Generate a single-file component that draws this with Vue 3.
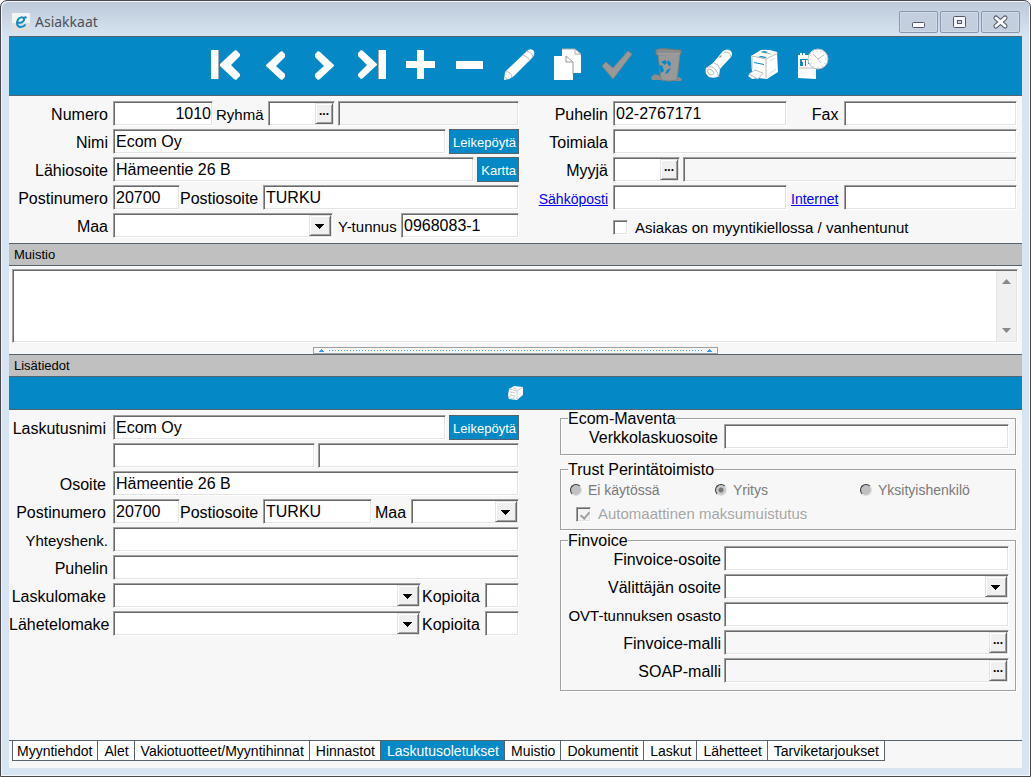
<script setup>
import { ref } from 'vue'

const customer = ref({
  number: '1010',
  name: 'Ecom Oy',
  street: 'Hämeentie 26 B',
  zip: '20700',
  city: 'TURKU',
  businessId: '0968083-1',
  phone: '02-2767171',
})
const billing = ref({ name: 'Ecom Oy', street: 'Hämeentie 26 B', zip: '20700', city: 'TURKU' })
const collection = ref('Yritys')
const collectionModes = ['Ei käytössä', 'Yritys', 'Yksityishenkilö']
const tabs = [
  'Myyntiehdot', 'Alet', 'Vakiotuotteet/Myyntihinnat', 'Hinnastot', 'Laskutusoletukset',
  'Muistio', 'Dokumentit', 'Laskut', 'Lähetteet', 'Tarviketarjoukset',
]
const activeTab = ref('Laskutusoletukset')
</script>

<template>
  <div class="window">
    <header class="titlebar">
      <svg class="app-icon" viewBox="0 0 18 18">
        <rect width="18" height="18" rx="1" fill="#f4f4f4" />
        <rect y="10" width="18" height="8" fill="#dedede" />
        <path d="M5 9.500 C9 10.500 12.500 8.500 12 6 C11 3.500 7.500 4 6 6.500 C4 10 5 13.500 8 14 C10.500 14.300 12.500 13 13.500 11.500 M12 5 L14.500 4" fill="none" stroke="#118bc6" stroke-width="2" />
      </svg>
      <h1>Asiakkaat</h1>
      <div class="window-buttons">
        <button type="button" aria-label="Pienennä">
          <svg viewBox="0 0 37 20"><rect x="12.500" y="10.500" width="12" height="5" rx="1" fill="#fff" stroke="#515768" /></svg>
        </button>
        <button type="button" aria-label="Suurenna">
          <svg viewBox="0 0 37 20"><rect x="12.500" y="4.500" width="12" height="11" rx="1" fill="#f7f7f7" stroke="#515768" /><rect x="16.500" y="8.500" width="4" height="3" fill="#c6d3e2" stroke="#515768" /></svg>
        </button>
        <button type="button" aria-label="Sulje">
          <svg viewBox="0 0 37 20"><path d="M14 6 L23 14 M23 6 L14 14" stroke="#515768" stroke-width="5" stroke-linecap="round" /><path d="M14 6 L23 14 M23 6 L14 14" stroke="#fafafa" stroke-width="3" stroke-linecap="round" /></svg>
        </button>
      </div>
    </header>

    <main class="client">
      <nav class="toolbar" aria-label="Toiminnot">
        <button type="button" aria-label="Ensimmäinen">
          <svg viewBox="0 0 49 58" fill="#fff"><path d="M17 13h1v29h-1z" fill="#aaa" /><path d="M10 13h7v29h-7z" /><path d="M19 27 33 14l2-1 4 4v2l-9 9 9 9v2l-4 4-2-1-14-13z" /></svg>
        </button>
        <button type="button" aria-label="Edellinen">
          <svg viewBox="0 0 49 58" fill="#fff"><path d="M16 28 30 15l2-1 3 3v3l-9 9 9 8v3l-3 3-2-1-14-13z" /></svg>
        </button>
        <button type="button" aria-label="Seuraava">
          <svg viewBox="0 0 49 58" fill="#fff"><path d="M35 28 21 15l-2-1-3 3v3l9 9-9 8v3l3 3 2-1 14-13z" /></svg>
        </button>
        <button type="button" aria-label="Viimeinen">
          <svg viewBox="0 0 49 58" fill="#fff"><path d="M30 13h1v29h-1z" fill="#aaa" /><path d="M31 13h7v29h-7z" /><path d="M29 27 15 14l-2-1-3 3v3l9 9-9 9v2l3 3 2-1 14-13z" /></svg>
        </button>
        <button type="button" aria-label="Lisää">
          <svg viewBox="0 0 49 58" fill="#fff"><path d="M20 13h7v11h11v7H27v11h-7V31H9v-7h11z" /></svg>
        </button>
        <button type="button" aria-label="Poista rivi">
          <svg viewBox="0 0 49 58" fill="#fff"><path d="M10 24h27v8H10z" /></svg>
        </button>
        <button type="button" aria-label="Muokkaa">
          <svg viewBox="0 0 49 58" fill="#fff"><path d="M9 43l1-8 4-4 18-17q3-3 6-1 2 2 1 5l-2 3-18 18-5 3z" /><path d="M10 35q3-1 5 1t2 5M9 39l3 3M28 18q5 1 7 6M31 14q6 1 7 6" fill="none" stroke="#bbb" /></svg>
        </button>
        <button type="button" aria-label="Kopioi">
          <svg viewBox="0 0 49 58" fill="#fff"><path d="M18 12h13l6 6v18H18z" /><path d="M31 12v5h6zM18 12h13" stroke="#aaa" /><path d="M10 19h13l6 5v19H10z" /><path d="M22 19v6h7zM29 25v12" fill="#fff" stroke="#999" /></svg>
        </button>
        <button type="button" aria-label="Hyväksy" disabled>
          <svg viewBox="0 0 49 58"><path d="M9 29l4-4 7 6 15-17 4 3-19 25z" fill="#999" stroke="#808080" stroke-linejoin="round" /></svg>
        </button>
        <button type="button" aria-label="Poista" disabled>
          <svg viewBox="0 0 49 58"><path d="M9 40l4-3 6 2 1 4H10zM34 42l3-2 3 2-1 2h-5z" fill="#8c8c8c" /><path d="M16 17h22l-3 26q-8 2-16 0z" fill="#999" stroke="#808080" /><path d="M14 13q2-2 12-1t13 1v4l-25 1z" fill="#8c8c8c" stroke="#777" /><path d="M16 17h22" stroke="#b5b5b5" /><path d="M19 25l4-2 2 2-2 3zM26 23l3 3-1 4-3-4zM17 29l3-1 2 6-3 2zM25 33l4-2-3 5-3 1z" fill="#0489c6" /></svg>
        </button>
        <button type="button" aria-label="Etsi">
          <svg viewBox="0 0 49 58" fill="#fff"><path d="M15 31l7-5 10-12q4-3 8 0 2 3 0 6l-11 12-1 7q-4 3-10 1-5-4-3-9z" /><path d="M15 31q6-3 9 1t4 8M23 26q5 1 6 6M33 15q6 0 7 5M19 38q-4-3-2-6 5 0 6 4 0 2-4 2" fill="none" stroke="#bbb" /><path d="M28 20l2-2 1 1-2 2z" fill="#999" /></svg>
        </button>
        <button type="button" aria-label="Tulosta">
          <svg viewBox="0 0 49 58"><path d="M11 19l10-6q8-1 16 2l1 20-11 7-8-1-7 1-4-3 4-4z" fill="#fff" /><path d="M11 19q8 1 15 3l12-6M26 22v19M12 20v12M21 15l10 2" fill="none" stroke="#bbb" /><path d="M18 20l3-1 6 1-2 1zM21 15l3-1 4 1-2 1zM14 25l10 2v1l-10-2z" fill="#0489c6" /><path d="M9 37l6-4 8 3-5 6z" fill="#fff" stroke="#bbb" /><path d="M30 24l5-3M30 36l6-4" stroke="#ddd" /></svg>
        </button>
        <button type="button" aria-label="Ajastus">
          <svg viewBox="0 0 49 58"><path d="M9 18h18v24l-18-1z" fill="#fff" /><path d="M11 22h11v7H11z" fill="#0489c6" /><path d="M13 24h2v5M18 23v5h4M12 16v3M15 16v3" fill="none" stroke="#fff" stroke-width="2" /><path d="M10 31h16" stroke="#bbb" /><circle cx="29" cy="22" r="10" fill="#fff" stroke="#bbb" /><circle cx="29" cy="22" r="8" fill="none" stroke="#bbb" stroke-dasharray="1 3" /><path d="M24 17l5 5 6-4M29 22l3 4" fill="none" stroke="#bbb" /></svg>
        </button>
      </nav>

      <form class="panels basics" @submit.prevent>
        <div class="rows">
          <div class="row">
            <label class="lead" for="number">Numero</label>
            <input id="number" v-model="customer.number" class="field number" type="text">
            <label class="near compact" for="group">Ryhmä</label>
            <span class="field lookup short"><input id="group" type="text"><button type="button" aria-label="Valitse ryhmä">...</button></span>
            <input class="field grow readonly" type="text" readonly aria-label="Ryhmän nimi">
          </div>
          <div class="row">
            <label class="lead" for="name">Nimi</label>
            <input id="name" v-model="customer.name" class="field grow" type="text">
            <button class="action" type="button">Leikepöytä</button>
          </div>
          <div class="row">
            <label class="lead" for="street">Lähiosoite</label>
            <input id="street" v-model="customer.street" class="field grow" type="text">
            <button class="action" type="button">Kartta</button>
          </div>
          <div class="row">
            <label class="lead" for="zip">Postinumero</label>
            <input id="zip" v-model="customer.zip" class="field short" type="text">
            <label class="joined" for="city">Postiosoite</label>
            <input id="city" v-model="customer.city" class="field grow" type="text">
          </div>
          <div class="row">
            <label class="lead" for="country">Maa</label>
            <span class="field combo grow"><select id="country"><option></option></select></span>
            <label class="middle compact" for="business">Y-tunnus</label>
            <input id="business" v-model="customer.businessId" class="field business" type="text">
          </div>
        </div>

        <div class="rows contact">
          <div class="row">
            <label class="lead" for="phone">Puhelin</label>
            <input id="phone" v-model="customer.phone" class="field grow" type="text">
            <label class="second" for="fax">Fax</label>
            <input id="fax" class="field grow" type="text">
          </div>
          <div class="row">
            <label class="lead" for="branch">Toimiala</label>
            <input id="branch" class="field grow" type="text">
          </div>
          <div class="row">
            <label class="lead" for="seller">Myyjä</label>
            <span class="field lookup short"><input id="seller" type="text"><button type="button" aria-label="Valitse myyjä">...</button></span>
            <input class="field grow readonly" type="text" readonly aria-label="Myyjän nimi">
          </div>
          <div class="row">
            <span class="lead"><a href="#email">Sähköposti</a></span>
            <input class="field grow" type="text" aria-label="Sähköposti">
            <span class="second"><a href="#internet">Internet</a></span>
            <input class="field grow" type="text" aria-label="Internet">
          </div>
          <div class="row">
            <label class="banned compact"><input type="checkbox">Asiakas on myyntikiellossa / vanhentunut</label>
          </div>
        </div>
      </form>

      <h2 class="section">Muistio</h2>
      <div class="memo field">
        <textarea aria-label="Muistio"></textarea>
        <div class="scroller">
          <button type="button" aria-label="Ylös"><svg viewBox="0 0 9 5"><path d="M0 5 4.500 0 9 5z" fill="#888" /></svg></button>
          <button type="button" aria-label="Alas"><svg viewBox="0 0 9 5"><path d="M0 0h9L4.500 5z" fill="#888" /></svg></button>
        </div>
      </div>
      <button class="splitter" type="button" aria-label="Pienennä muistio">
        <svg viewBox="0 0 5 3"><path d="M2 0h1v1h1v1h1v1H0V2h1V1h1z" /></svg>
        <span class="dots"></span>
        <svg viewBox="0 0 5 3"><path d="M2 0h1v1h1v1h1v1H0V2h1V1h1z" /></svg>
      </button>
      <h2 class="section">Lisätiedot</h2>

      <div class="subbar">
        <button type="button" aria-label="Tulosta">
          <svg viewBox="0 0 17 16"><path d="M2 4l5-3 9 1v8l-6 5-8-1-1-4z" fill="#fff" /><path d="M2 4l8 2 6-4M10 6v8M3 7l5 1M6 3l4 1" fill="none" stroke="#ccc" /><path d="M1 12l3-2 4 1-2 3z" fill="#fff" stroke="#ccc" /></svg>
        </button>
      </div>

      <form class="panels details" @submit.prevent>
        <div class="rows">
          <div class="row">
            <label class="lead inset" for="bill-name">Laskutusnimi</label>
            <input id="bill-name" v-model="billing.name" class="field grow" type="text">
            <button class="action" type="button">Leikepöytä</button>
          </div>
          <div class="row">
            <span class="lead"></span>
            <input class="field grow" type="text" aria-label="Laskutusnimi, rivi 2">
            <input class="field grow" type="text" aria-label="Laskutusnimi, rivi 3">
          </div>
          <div class="row">
            <label class="lead inset" for="bill-street">Osoite</label>
            <input id="bill-street" v-model="billing.street" class="field grow" type="text">
          </div>
          <div class="row">
            <label class="lead inset" for="bill-zip">Postinumero</label>
            <input id="bill-zip" v-model="billing.zip" class="field short" type="text">
            <label class="joined" for="bill-city">Postiosoite</label>
            <input id="bill-city" v-model="billing.city" class="field grow" type="text">
            <label class="land" for="bill-country">Maa</label>
            <span class="field combo grow"><select id="bill-country"><option></option></select></span>
          </div>
          <div class="row">
            <label class="lead compact" for="contact">Yhteyshenk.</label>
            <input id="contact" class="field grow" type="text">
          </div>
          <div class="row">
            <label class="lead" for="bill-phone">Puhelin</label>
            <input id="bill-phone" class="field grow" type="text">
          </div>
          <div class="row">
            <label class="lead inset" for="invoice-form">Laskulomake</label>
            <span class="field combo grow"><select id="invoice-form"><option></option></select></span>
            <label class="copies" for="invoice-copies">Kopioita</label>
            <input id="invoice-copies" class="field tiny" type="text">
          </div>
          <div class="row">
            <label class="lead" for="delivery-form">Lähetelomake</label>
            <span class="field combo grow"><select id="delivery-form"><option></option></select></span>
            <label class="copies" for="delivery-copies">Kopioita</label>
            <input id="delivery-copies" class="field tiny" type="text">
          </div>
        </div>

        <div class="groups">
          <fieldset>
            <legend>Ecom-Maventa</legend>
            <div class="row">
              <label class="lead inset" for="einvoice">Verkkolaskuosoite</label>
              <input id="einvoice" class="field grow" type="text">
            </div>
          </fieldset>
          <fieldset disabled>
            <legend>Trust Perintätoimisto</legend>
            <div class="modes">
              <label v-for="mode in collectionModes" :key="mode">
                <input v-model="collection" type="radio" name="collection" :value="mode">{{ mode }}
              </label>
            </div>
            <label class="reminder compact"><input type="checkbox" checked><span>Automaattinen maksumuistutus</span></label>
          </fieldset>
          <fieldset>
            <legend>Finvoice</legend>
            <div class="rows">
              <div class="row">
                <label class="lead" for="fin-address">Finvoice-osoite</label>
                <input id="fin-address" class="field grow" type="text">
              </div>
              <div class="row">
                <label class="lead" for="broker">Välittäjän osoite</label>
                <span class="field combo grow"><select id="broker"><option></option></select></span>
              </div>
              <div class="row">
                <label class="lead compact" for="ovt">OVT-tunnuksen osasto</label>
                <input id="ovt" class="field grow" type="text">
              </div>
              <div class="row">
                <label class="lead" for="fin-template">Finvoice-malli</label>
                <span class="field lookup grow readonly"><input id="fin-template" type="text" readonly><button type="button" aria-label="Valitse Finvoice-malli">...</button></span>
              </div>
              <div class="row">
                <label class="lead" for="soap-template">SOAP-malli</label>
                <span class="field lookup grow readonly"><input id="soap-template" type="text" readonly><button type="button" aria-label="Valitse SOAP-malli">...</button></span>
              </div>
            </div>
          </fieldset>
        </div>
      </form>

      <nav class="tabs" aria-label="Välilehdet">
        <button v-for="tab in tabs" :key="tab" type="button" :class="{ active: tab === activeTab }" @click="activeTab = tab">{{ tab }}</button>
      </nav>
    </main>
  </div>
</template>

<style>
body {
  background: #fff;
}
</style>

<style scoped>
.window, .window * {
  box-sizing: border-box;
}
.window {
  display: flex;
  flex-direction: column;
  min-height: 100vh;
  padding: 0 7px 8px;
  border: 1px solid #47474c;
  border-radius: 7px 7px 0 0;
  box-shadow: inset 1px 1px #f3f7fb, inset -1px -1px #f3f7fb;
  background: linear-gradient(#bdc9d8, #d7e4f2 36px);
  color: #000;
  font: 16px/20px "Liberation Sans", Arial, sans-serif;
}
button, input, select, textarea {
  margin: 0;
  padding: 0;
  border: 0;
  border-radius: 0;
  outline: 0;
  background: none;
  color: inherit;
  font: inherit;
}
svg {
  display: block;
}
.titlebar {
  display: flex;
  align-items: center;
  gap: 5px;
  height: 35px;
  padding: 6px 3px 0 4px;
}
.app-icon {
  width: 18px;
  height: 18px;
}
h1 {
  flex: 1;
  margin: 0;
  color: #4b5058;
  font: 14px/20px "Noto Sans", sans-serif;
}
.window-buttons {
  display: flex;
  gap: 2px;
}
.window-buttons button {
  width: 39px;
  height: 22px;
  border: 1px solid #8996b0;
  border-radius: 2px;
  background: #c3cfde;
  box-shadow: inset 0 0 0 1px #d0dae7;
}
.window-buttons svg {
  width: 37px;
  height: 20px;
}
.client {
  display: flex;
  flex: 1;
  flex-direction: column;
  margin: 0 1px;
  background: #f7f7f7;
}
.toolbar {
  display: flex;
  justify-content: center;
  padding-left: 7px;
  border-top: 1px solid #56646e;
  border-bottom: 1px solid #56646e;
  background: #0489c6;
}
.toolbar button, .toolbar svg {
  width: 49px;
  height: 58px;
}

/* form grid */
.panels {
  display: grid;
  grid-template-columns: minmax(0, 510fr) minmax(0, 498fr);
  padding-right: 5px;
}
.basics {
  padding-top: 5px;
  padding-bottom: 5px;
}
.details {
  flex: 1;
  padding-top: 5px;
  align-items: start;
}
.rows {
  display: flex;
  flex-direction: column;
  gap: 3px;
}
.row {
  display: flex;
  gap: 3px;
  height: 25px;
}
.row > label, .row > span:not(.field) {
  flex: none;
  padding-top: 4px;
  white-space: nowrap;
}
.lead {
  width: 101px;
  padding-right: 2px;
  text-align: right;
}
.lead.inset {
  padding-right: 4px;
}
.contact .lead {
  width: 91px;
}
.compact {
  font-size: 15px;
}
.near {
  width: 49px;
}
.joined {
  width: 80px;
  margin-left: -3px;
}
.middle {
  width: 62px;
  padding-left: 2px;
}
.second {
  width: 51px;
  padding-right: 2px;
  text-align: right;
}
.land {
  width: 33px;
}
.copies {
  width: 61px;
  margin-left: -3px;
  padding-left: 1px;
}
a {
  color: #00f;
  font-size: 14px;
}
.field {
  min-width: 0;
  padding: 0 1px 0 2px;
  border: 1px solid;
  border-color: #a0a0a0 #fff #fff #a0a0a0;
  box-shadow: inset 1px 1px #696969, inset -1px -1px #e3e3e3;
  background: #fff;
}
.field.readonly {
  background: #f7f7f7;
}
.grow {
  flex: 1 1 0;
}
.number {
  width: 100px;
  text-align: right;
}
.short {
  width: 67px;
}
.business {
  width: 118px;
}
.tiny {
  width: 34px;
}
.lookup, .combo {
  display: flex;
  padding: 1px;
}
.lookup input {
  flex: 1;
  width: 0;
  min-width: 0;
}
.lookup button {
  width: 18px;
  padding-bottom: 5px;
  border: 1px solid;
  border-color: #e3e3e3 #696969 #696969 #e3e3e3;
  box-shadow: inset 1px 1px #fff, inset -1px -1px #a0a0a0;
  background: #f0f0f0;
  font-size: 12px;
  font-weight: bold;
  line-height: 12px;
}
.combo {
  position: relative;
}
.combo select {
  width: 100%;
  appearance: none;
}
.combo::after {
  position: absolute;
  top: 1px;
  right: 1px;
  bottom: 1px;
  width: 20px;
  border: 1px solid;
  border-color: #e3e3e3 #696969 #696969 #e3e3e3;
  background: linear-gradient(#000, #000) 5px 8px / 9px 1px no-repeat,
    linear-gradient(#000, #000) 6px 9px / 7px 1px no-repeat,
    linear-gradient(#000, #000) 7px 10px / 5px 1px no-repeat,
    linear-gradient(#000, #000) 8px 11px / 3px 1px no-repeat,
    linear-gradient(#000, #000) 9px 12px / 1px 1px no-repeat, #f0f0f0;
  box-shadow: inset 1px 1px #fff, inset -1px -1px #a0a0a0;
  content: "";
  pointer-events: none;
}
.action {
  padding: 3px 2px 0 3px;
  border: 1px solid #56646e;
  background: #0489c6;
  color: #fff;
  font-size: 13px;
}
input[type="checkbox"] {
  width: 15px;
  height: 15px;
  flex: none;
  appearance: none;
  border: 1px solid;
  border-color: #a0a0a0 #fff #fff #a0a0a0;
  background: #fff;
  box-shadow: inset 1px 1px #696969, inset -1px -1px #e3e3e3;
}
.banned {
  display: flex;
  gap: 7px;
  align-items: center;
  margin-left: 94px;
}

/* memo */
.section {
  margin: 0;
  padding: 0 5px;
  border-top: 1px solid #56646e;
  border-bottom: 1px solid #56646e;
  background: #c0c0c0;
  font-size: 13px;
  font-weight: normal;
  line-height: 21px;
}
.memo {
  display: flex;
  height: 74px;
  margin: 3px 4px 4px 3px;
  padding: 1px;
}
.memo textarea {
  flex: 1;
  resize: none;
}
.scroller {
  display: flex;
  flex-direction: column;
  justify-content: space-between;
  width: 20px;
  padding: 8px 5px;
  border-left: 1px solid #e3e3e3;
  background: #f0f0f0;
}
.scroller button, .scroller svg {
  width: 9px;
  height: 5px;
}
.splitter {
  display: flex;
  align-items: center;
  gap: 5px;
  width: 40%;
  height: 7px;
  margin: 0 auto;
  padding: 0 5px;
  border: 1px solid #a0a0a0;
}
.splitter svg {
  width: 5px;
  height: 3px;
  fill: #3399ff;
}
.dots {
  flex: 1;
  height: 1px;
  background: repeating-linear-gradient(90deg, #3399ff 0 1px, transparent 1px 3px);
}
.subbar {
  display: flex;
  justify-content: center;
  height: 33px;
  border-bottom: 1px solid #56646e;
  background: #0489c6;
}
.subbar button, .subbar svg {
  width: 17px;
}

/* group boxes */
.groups {
  padding: 3px 1px 0 41px;
}
fieldset {
  position: relative;
  min-width: 0;
  margin: 0 0 14px;
  padding: 5px 6px;
  border: 1px solid #a0a0a0;
  box-shadow: 1px 1px #fff, inset 1px 1px #fff;
}
fieldset:nth-child(2) {
  margin-bottom: 10px;
}
fieldset:last-child {
  margin-bottom: 0;
  padding-bottom: 7px;
}
legend {
  position: absolute;
  top: -9px;
  left: 7px;
  padding: 0;
  background: #f7f7f7;
  line-height: 18px;
}
.groups .lead {
  width: 154px;
  padding-right: 0;
}
.groups .lead.inset {
  padding-right: 3px;
}
.modes {
  display: grid;
  grid-template-columns: repeat(3, 145px);
  margin-left: 3px;
  padding-top: 5px;
}
.modes label {
  display: flex;
  gap: 6px;
  align-items: center;
  color: #7a7a7a;
  font-size: 14px;
}
.modes input {
  width: 12px;
  height: 12px;
  appearance: none;
  border: 1px solid;
  border-color: #333 #e3e3e3 #e3e3e3 #333;
  border-radius: 50%;
  background: #c0c0c0;
}
.modes input:checked {
  background: radial-gradient(circle, #777 2px, #c8c8c8 3px);
}
.reminder {
  display: flex;
  gap: 7px;
  align-items: center;
  margin: 4px 0 0 9px;
  color: #a6a6a6;
}
.reminder span {
  text-shadow: 1px 1px #fff;
  white-space: nowrap;
}
.reminder input {
  position: relative;
  background: #f3f3f3;
}
.reminder input::after {
  position: absolute;
  top: 2px;
  left: 5px;
  width: 4px;
  height: 7px;
  border: solid #a0a0a0;
  border-width: 0 2px 2px 0;
  content: "";
  transform: rotate(40deg);
}

.tabs {
  display: flex;
  margin-bottom: 7px;
  padding-left: 3px;
  border-top: 1px solid #56646e;
}
.tabs button {
  height: 20px;
  padding: 1px 5px 0 6px;
  border: 1px solid #56646e;
  border-width: 0 1px 1px 0;
  background: #fff;
  font-size: 14px;
  line-height: 18px;
  white-space: nowrap;
}
.tabs button:first-child {
  border-left-width: 1px;
  padding-left: 4px;
}
.tabs .active {
  background: #0489c6;
  color: #fff;
}
</style>
